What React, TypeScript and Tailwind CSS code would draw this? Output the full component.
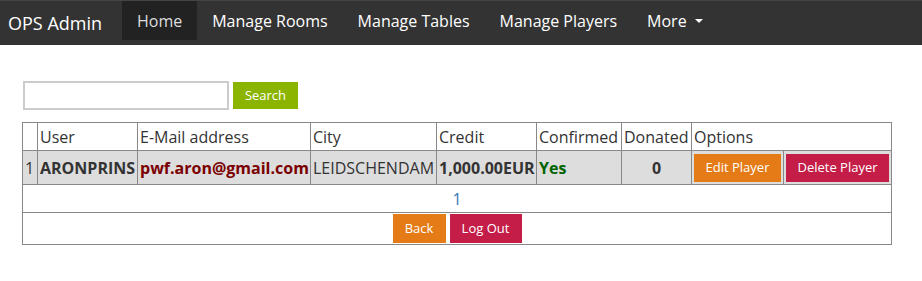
import React from "react";

const th = "border border-[#888] px-[2px] text-left font-normal whitespace-nowrap";
const td = "border border-[#888] px-[2px] whitespace-nowrap";

export default function App() {
  return (
    <div className="w-[922px] h-[281px] bg-white text-[#333] font-['Open_Sans',sans-serif]">
      <nav className="h-[45px] bg-[#333] border-t border-[#444] flex items-start text-white">
        <div className="w-[122px] h-[44px] flex items-center pl-[8px] text-[18px] text-white">OPS Admin</div>
        <div className="h-[39px] bg-[#222] px-[15px] flex items-center text-[16px] text-[#ddd]">Home</div>
        <div className="h-[39px] px-[15px] flex items-center text-[16px]">Manage Rooms</div>
        <div className="h-[39px] px-[15px] flex items-center text-[16px]">Manage Tables</div>
        <div className="h-[39px] px-[15px] flex items-center text-[16px]">Manage Players</div>
        <div className="h-[39px] px-[15px] flex items-center text-[16px]">
          More
          <span className="ml-[8px] inline-block w-0 h-0 border-l-[4px] border-r-[4px] border-t-[4px] border-l-transparent border-r-transparent border-t-white" />
        </div>
      </nav>

      <div className="pl-[23px] pt-[36px] flex items-center gap-[4px]">
        <input className="w-[206px] h-[29px] border-2 border-[#ccc] outline-none" />
        <button className="w-[65px] h-[27px] bg-[#8ab400] text-white text-[13px]">Search</button>
      </div>

      <table className="ml-[22px] mt-[12px] border-collapse table-fixed w-[869px] text-[16px]">
        <colgroup>
          <col className="w-[15px]" />
          <col className="w-[100px]" />
          <col className="w-[173px]" />
          <col className="w-[126px]" />
          <col className="w-[100px]" />
          <col className="w-[85px]" />
          <col className="w-[70px]" />
          <col className="w-[92px]" />
          <col className="w-[108px]" />
        </colgroup>
        <thead>
          <tr className="h-[28px]">
            <th className={th}></th>
            <th className={th}>User</th>
            <th className={th}>E-Mail address</th>
            <th className={th}>City</th>
            <th className={th}>Credit</th>
            <th className={th}>Confirmed</th>
            <th className={th}>Donated</th>
            <th className={th} colSpan={2}>Options</th>
          </tr>
        </thead>
        <tbody>
          <tr className="h-[34px] bg-[#ddd]">
            <td className={td}>1</td>
            <td className={td + " font-bold"}>ARONPRINS</td>
            <td className={td + " font-bold text-[#7a0000]"}>pwf.aron@gmail.com</td>
            <td className={td}>LEIDSCHENDAM</td>
            <td className={td + " font-bold"}>1,000.00EUR</td>
            <td className={td + " font-bold text-[#006400]"}>Yes</td>
            <td className={td + " font-bold text-center"}>0</td>
            <td className="border border-[#888] p-[2px]">
              <button className="w-full h-[28px] bg-[#e47b16] text-white text-[13px]">Edit Player</button>
            </td>
            <td className="border border-[#888] p-[2px]">
              <button className="w-full h-[28px] bg-[#c41d47] text-white text-[13px]">Delete Player</button>
            </td>
          </tr>
          <tr className="h-[28px]">
            <td colSpan={9} className="border border-[#888] text-center text-[#337ab7]">1</td>
          </tr>
          <tr className="h-[32px]">
            <td colSpan={9} className="border border-[#888] text-center">
              <div className="flex justify-center gap-[4px]">
                <button className="w-[53px] h-[29px] bg-[#e47b16] text-white text-[13px]">Back</button>
                <button className="w-[72px] h-[29px] bg-[#c41d47] text-white text-[13px]">Log Out</button>
              </div>
            </td>
          </tr>
        </tbody>
      </table>
    </div>
  );
}
